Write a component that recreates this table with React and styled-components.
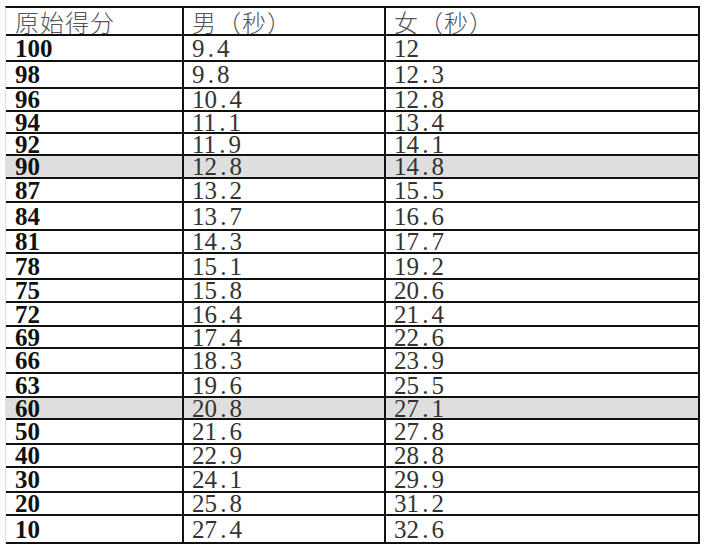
import React from "react";
import styled, { createGlobalStyle } from "styled-components";

const GlobalStyle = createGlobalStyle`
  html, body {
    margin: 0;
    padding: 0;
    background: #ffffff;
  }
  body {
    font-family: "Liberation Serif", "Noto Sans CJK SC", serif;
  }
`;

// line-to-line heights taken from the sheet, header first
const rows = [
  ["100", "9.4", "12", 26],
  ["98", "9.8", "12.3", 27],
  ["96", "10.4", "12.8", 23],
  ["94", "11.1", "13.4", 22],
  ["92", "11.9", "14.1", 22],
  ["90", "12.8", "14.8", 23, true],
  ["87", "13.2", "15.5", 24],
  ["84", "13.7", "16.6", 28],
  ["81", "14.3", "17.7", 23],
  ["78", "15.1", "19.2", 26],
  ["75", "15.8", "20.6", 23],
  ["72", "16.4", "21.4", 24],
  ["69", "17.4", "22.6", 22],
  ["66", "18.3", "23.9", 25],
  ["63", "19.6", "25.5", 24],
  ["60", "20.8", "27.1", 22, true],
  ["50", "21.6", "27.8", 25],
  ["40", "22.9", "28.8", 23],
  ["30", "24.1", "29.9", 25],
  ["20", "25.8", "31.2", 23],
  ["10", "27.4", "32.6", 28],
];

const Sheet = styled.div`
  width: 695px;
  margin: 6px 0 0 5px;
  box-sizing: border-box;
  border-top: 2px solid #111;
  border-right: 2px solid #111;
  border-left: 1px dotted #c4c4c4;
`;

const Row = styled.div`
  display: grid;
  grid-template-columns: 178px 202px 1fr;
  height: ${(p) => p.$h}px;
  box-sizing: border-box;
  border-bottom: 2px solid #111;
  background: ${(p) => (p.$shade ? "#dedede" : "transparent")};
`;

const Cell = styled.div`
  display: flex;
  align-items: center;
  box-sizing: border-box;
  padding-left: ${(p) => (p.$first ? 9 : 8)}px;
  border-right: ${(p) => (p.$last ? "none" : "2px solid #111")};
  white-space: nowrap;
  line-height: 19px;
`;

const HeadText = styled.span`
  font-family: "Noto Sans CJK SC", sans-serif;
  font-size: 24px;
  font-weight: 300;
  color: #555;
  letter-spacing: 1px;
`;

const Score = styled.span`
  font-family: "Liberation Serif", serif;
  font-size: 25px;
  font-weight: 700;
  color: #111;
`;

const Time = styled.span`
  font-family: "Liberation Serif", serif;
  font-size: 25px;
  font-weight: 400;
  color: #333;
`;

const Dot = styled.span`
  display: inline-block;
  width: 0.5em;
  text-align: center;
`;

const Seconds = ({ value }) => {
  const [a, b] = value.split(".");
  return (
    <Time>
      {a}
      {b !== undefined && (
        <>
          <Dot>.</Dot>
          {b}
        </>
      )}
    </Time>
  );
};

export default function App() {
  return (
    <>
      <GlobalStyle />
      <Sheet>
        <Row $h={28}>
          <Cell $first>
            <HeadText>原始得分</HeadText>
          </Cell>
          <Cell>
            <HeadText>男（秒）</HeadText>
          </Cell>
          <Cell $last>
            <HeadText>女（秒）</HeadText>
          </Cell>
        </Row>
        {rows.map(([score, male, female, h, shade]) => (
          <Row key={score} $h={h} $shade={shade}>
            <Cell $first>
              <Score>{score}</Score>
            </Cell>
            <Cell>
              <Seconds value={male} />
            </Cell>
            <Cell $last>
              <Seconds value={female} />
            </Cell>
          </Row>
        ))}
      </Sheet>
    </>
  );
}
